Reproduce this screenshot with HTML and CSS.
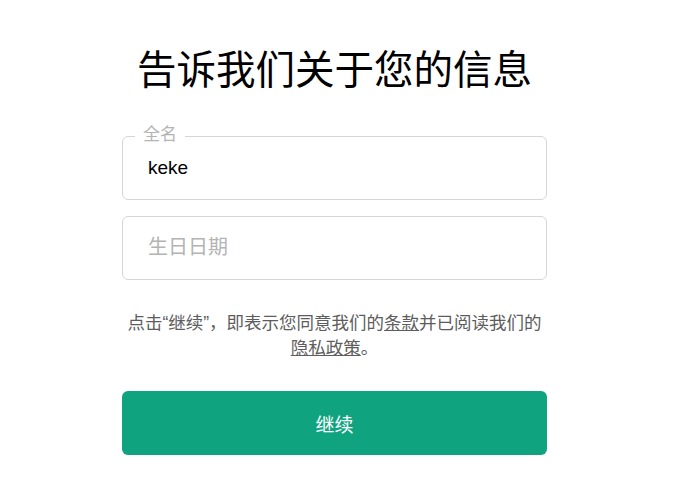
FILE: index.html
```html
<!DOCTYPE html>
<html lang="zh-CN">
<head>
  <meta charset="UTF-8">
  <title>告诉我们关于您的信息</title>
  <link rel="stylesheet" href="styles.css">
</head>
<body>

<div class="page">
  <h1 class="title">告诉我们关于您的信息</h1>

  <div class="field">
    <span class="field-label">全名</span>
    <input type="text" class="field-input" value="keke">
  </div>

  <div class="field">
    <input type="text" class="field-input" placeholder="生日日期">
  </div>

  <p class="legal">
    点击“继续”，即表示您同意我们的<a href="#">条款</a>并已阅读我们的<a href="#">隐私政策</a>。
  </p>

  <button class="btn-continue">继续</button>
</div>

</body>
</html>
```

FILE: styles.css
```css
* {
  box-sizing: border-box;
}

html, body {
  margin: 0;
  background: #fff;
  font-family: "Liberation Sans", "Noto Sans CJK SC", sans-serif;
}

.page {
  width: 425px;
  margin-left: 122px;
  padding-top: 46px;
  display: flex;
  flex-direction: column;
}

.title {
  margin: 0 0 42px;
  font-size: 39.5px;
  font-weight: normal;
  line-height: 48px;
  white-space: nowrap;
  text-align: center;
  color: #000;
}

.field {
  position: relative;
  margin-bottom: 16px;
}

.field-label {
  position: absolute;
  top: -11px;
  left: 13px;
  padding: 0 8px;
  background: #fff;
  font-size: 17px;
  line-height: 20px;
  color: #b4b4b4;
}

.field-input {
  width: 100%;
  height: 64px;
  padding: 0 25px;
  border: 1px solid #d6d6d6;
  border-radius: 6px;
  font-family: inherit;
  font-size: 19px;
  color: #000;
  outline: none;
}

.field-input::placeholder {
  font-size: 20px;
  color: #b4b4b4;
}

.legal {
  margin: 15px 0 30px;
  font-size: 17.5px;
  line-height: 25px;
  text-align: center;
  color: #5d5d5d;
}

.legal a {
  color: inherit;
  text-decoration: underline;
}

.btn-continue {
  height: 64px;
  border: none;
  border-radius: 6px;
  background: #10a37f;
  color: #fff;
  font-family: inherit;
  font-size: 19px;
  cursor: pointer;
}
```
